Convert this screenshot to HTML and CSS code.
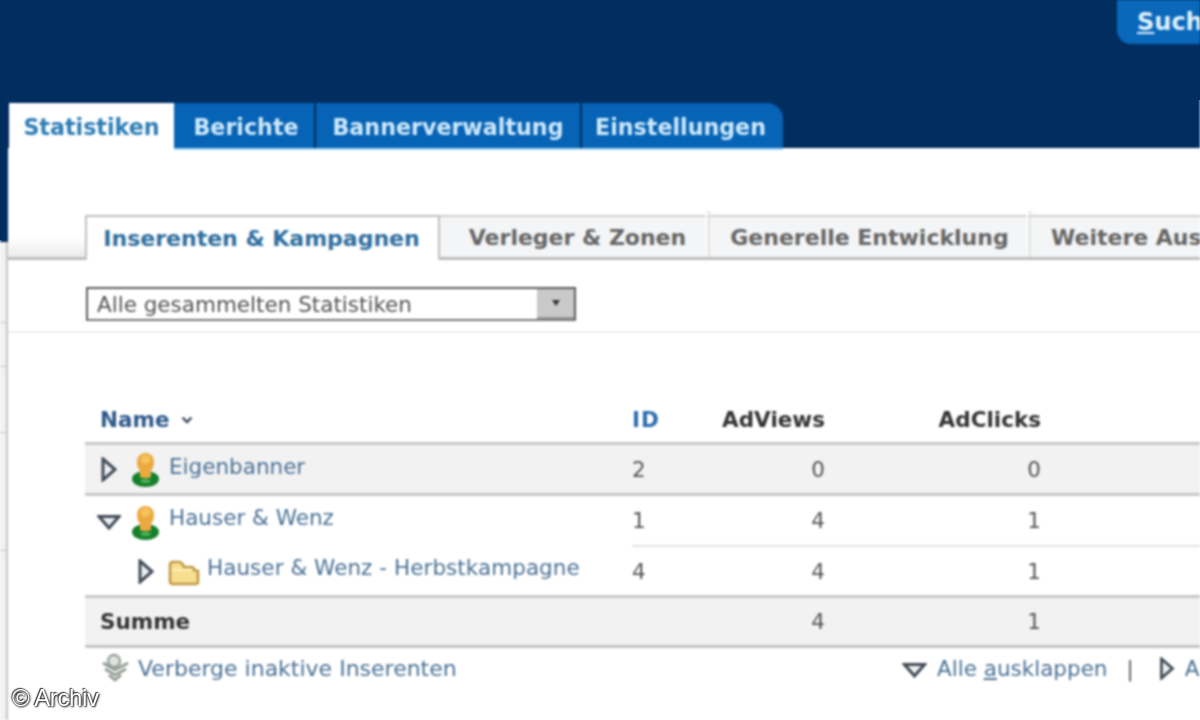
FILE: index.html
```html
<!DOCTYPE html>
<html lang="de">
<head>
<meta charset="utf-8">
<title>Statistiken</title>
<link rel="stylesheet" href="styles.css">
</head>
<body>
<div class="page">
  <div class="blurred">
    <div class="rail">
      <div class="rail-top"></div>
      <div class="rail-bottom">
        <i class="tick t1"></i><i class="tick t2"></i><i class="tick t3"></i><i class="tick t4"></i>
      </div>
    </div>
    <div class="main">
      <header class="head">
        <div class="search-row"><div class="search"><u>S</u>uche</div></div>
        <nav class="tabs">
          <div class="tab tab-active">Statistiken</div>
          <div class="tab tab-reports">Berichte</div>
          <div class="tab tab-banner">Bannerverwaltung</div>
          <div class="tab tab-settings">Einstellungen</div>
        </nav>
      </header>
      <div class="tabline"></div>
      <div class="subtabs">
        <div class="subtab-lead"></div>
        <div class="subtab sub-active">Inserenten &amp; Kampagnen</div>
        <div class="subtab sub-pub">Verleger &amp; Zonen</div>
        <div class="subtab sub-gen">Generelle Entwicklung</div>
        <div class="subtab sub-more">Weitere Ausgaben</div>
      </div>
      <div class="filter">
        <div class="select">
          <span class="select-text">Alle gesammelten Statistiken</span>
          <span class="select-btn"><svg width="8" height="6" viewBox="0 0 8 6"><path d="M0 0h8L4 6z" fill="#333"/></svg></span>
        </div>
      </div>
      <div class="table">
        <div class="row row-head">
          <div class="cell name"><span class="link-strong">Name</span>
            <svg class="sort" width="12" height="8" viewBox="0 0 12 8"><path d="M1.500 1.500 6 6l4.500-4.500" fill="none" stroke="#3a4a60" stroke-width="2.400"/></svg>
          </div>
          <div class="cell id link-id">ID</div>
          <div class="cell num">AdViews</div>
          <div class="cell num">AdClicks</div>
          <div class="cell"></div>
        </div>
        <div class="row row-shade row-thick">
          <div class="cell name">
            <span class="toggle"><svg class="tri-r" width="16" height="25" viewBox="0 0 16 25"><path d="M2 2 14 12.500 2 23z" fill="#eef1f4" stroke="#434c58" stroke-width="3"/></svg></span>
            <svg class="person" width="27" height="34" viewBox="0 0 27 34"><ellipse cx="13.500" cy="26" rx="13.500" ry="8" fill="#15802a"/><path d="M13.500 0c5 0 8.500 3.500 8.500 9 0 4-1 6.500-3 8.500V24c-3 1.500-8 1.500-11 0v-6.500C6 15.500 5 13 5 9c0-5.500 3.500-9 8.500-9z" fill="#eba93f"/><ellipse cx="13.500" cy="6.500" rx="5" ry="4.500" fill="#f5c25c"/><ellipse cx="13.500" cy="28" rx="5" ry="2" fill="#4fae58"/></svg>
            <span class="link">Eigenbanner</span>
          </div>
          <div class="cell id">2</div>
          <div class="cell num">0</div>
          <div class="cell num">0</div>
          <div class="cell"></div>
        </div>
        <div class="row row-open">
          <div class="cell name">
            <span class="toggle"><svg class="tri-d" width="24" height="16" viewBox="0 0 24 16"><path d="M2 2.500h20L12 14z" fill="#eef1f4" stroke="#434c58" stroke-width="3"/></svg></span>
            <svg class="person" width="27" height="34" viewBox="0 0 27 34"><ellipse cx="13.500" cy="26" rx="13.500" ry="8" fill="#15802a"/><path d="M13.500 0c5 0 8.500 3.500 8.500 9 0 4-1 6.500-3 8.500V24c-3 1.500-8 1.500-11 0v-6.500C6 15.500 5 13 5 9c0-5.500 3.500-9 8.500-9z" fill="#eba93f"/><ellipse cx="13.500" cy="6.500" rx="5" ry="4.500" fill="#f5c25c"/><ellipse cx="13.500" cy="28" rx="5" ry="2" fill="#4fae58"/></svg>
            <span class="link">Hauser &amp; Wenz</span>
          </div>
          <div class="cell id line-under">1</div>
          <div class="cell num line-under">4</div>
          <div class="cell num line-under">1</div>
          <div class="cell line-under"></div>
        </div>
        <div class="row row-mid">
          <div class="cell name child">
            <span class="toggle toggle-child"><svg class="tri-r" width="16" height="25" viewBox="0 0 16 25"><path d="M2 2 14 12.500 2 23z" fill="#eef1f4" stroke="#434c58" stroke-width="3"/></svg></span>
            <svg class="folder" width="32" height="26" viewBox="0 0 32 26"><path d="M2 22V5c0-2 1-3 3-3h6c2 0 3 1 4 3l1 2h7c2 0 3 1 3 3l4 1v11c0 1-1 2-3 2H5c-2 0-3-1-3-3z" fill="#f8df90" stroke="#c09a45" stroke-width="2.600"/><path d="M4 10h20" stroke="#fff0bd" stroke-width="2"/></svg>
            <span class="link">Hauser &amp; Wenz - Herbstkampagne</span>
          </div>
          <div class="cell id">4</div>
          <div class="cell num">4</div>
          <div class="cell num">1</div>
          <div class="cell"></div>
        </div>
        <div class="row row-shade row-sum">
          <div class="cell name"><strong class="sum">Summe</strong></div>
          <div class="cell id"></div>
          <div class="cell num">4</div>
          <div class="cell num">1</div>
          <div class="cell"></div>
        </div>
      </div>
      <div class="foot">
        <div class="foot-left">
          <svg class="hide-icon" width="29" height="30" viewBox="0 0 29 30"><circle cx="13" cy="8" r="6" fill="#dfe3df" stroke="#9aa29a" stroke-width="2.400"/><path d="M2 10l12 7 13-7M4 16l10 6 11-6M8 22l6 5 6-5" fill="none" stroke="#8f9b92" stroke-width="2.800"/></svg>
          <span class="link foot-hide">Verberge inaktive Inserenten</span>
        </div>
        <div class="foot-right">
          <svg class="tri-d foot-tri" width="25" height="16" viewBox="0 0 24 16"><path d="M2 2.500h20L12 14z" fill="#eef1f4" stroke="#434c58" stroke-width="3"/></svg>
          <span class="link">Alle <u>a</u>usklappen</span>
          <span class="sep">|</span>
          <svg class="tri-r" width="16" height="23" viewBox="0 0 16 25"><path d="M2 2 14 12.500 2 23z" fill="#eef1f4" stroke="#434c58" stroke-width="3"/></svg>
          <span class="link">Alle einklappen</span>
        </div>
      </div>
    </div>
  </div>
  <div class="credit">© Archiv</div>
</div>
</body>
</html>
```
FILE: styles.css
```css
* { box-sizing: border-box; }
html, body { margin: 0; padding: 0; background: #fff; }
body { font-family: "DejaVu Sans", Verdana, sans-serif; font-size: 21.5px; color: #444; }
.page {
  position: relative; width: 1200px; height: 720px; overflow: hidden;
  background:
    linear-gradient(#012d5f, #012d5f) 0 0 / 100% 100px no-repeat,
    linear-gradient(#012d5f, #012d5f) 0 0 / 4px 240px no-repeat,
    #fff;
}
.blurred { display: flex; width: 1200px; height: 720px; filter: blur(0.8px); }

.rail { width: 8px; flex: none; display: flex; flex-direction: column; }
.rail-top { height: 242px; background: #012d5f; }
.rail-bottom { flex: 1; background: #f2f2f2; position: relative; border-right: 2px solid #c4c4c4; }
.tick { position: absolute; left: 0; width: 8px; height: 1px; background: #c8c8c8; }
.t1 { top: 80px; } .t2 { top: 124px; } .t3 { top: 190px; } .t4 { top: 308px; }

.main { flex: 1; min-width: 0; display: flex; flex-direction: column; overflow: hidden; }

.head { height: 148px; background: #012d5f; display: flex; flex-direction: column; flex: none; }
.search-row { display: flex; justify-content: flex-end; height: 103px; flex: none; }
.search { width: 83px; height: 44px; background: #0a68bb; border-bottom-left-radius: 14px; color: #dff0fc; font-weight: 700; font-size: 24px; padding: 8px 0 0 20px; white-space: nowrap; overflow: hidden; }

.tabs { display: flex; height: 47px; gap: 2px; align-items: stretch; flex: none; font-weight: 700; font-size: 22.200px; padding-left: 1px; }
.tab { background: #0663b5; color: #cfe9fb; padding-top: 11px; white-space: nowrap; display: flex; justify-content: center; flex: none; }
.tab-active { width: 165px; margin-right: -2px; background: #fff; color: #2d7db5; height: 49px; }
.tab-reports { width: 140px; padding-left: 4px; }
.tab-banner { width: 264px; }
.tab-settings { width: 201px; border-top-right-radius: 16px; padding-right: 4px; }
.tabline { height: 2px; background: #a4d6f7; margin-left: 166px; width: 609px; flex: none; }

.subtabs { margin-top: 65px; height: 45px; display: flex; align-items: stretch; font-weight: 700; white-space: nowrap; flex: none; font-size: 22px; }
.subtab-lead { width: 77px; flex: none; background: linear-gradient(#fff 0 22px, #ececec 42px); border-bottom: 3px solid #bdbdbd; }
.subtab { position: relative; flex: none; display: flex; align-items: center; justify-content: center; background: #f4f5f6; border-top: 2px solid #cfcfcf; border-bottom: 3px solid #bdbdbd; color: #666; }
.sub-pub::after, .sub-gen::after { content: ""; position: absolute; right: 0; top: -6px; bottom: 0; width: 2px; background: #e2e2e2; box-shadow: -3px 0 0 #fafafa, 3px 0 0 #fafafa; }
.sub-active { width: 355px; background: #fff; color: #2f6f9f; border: 2px solid #c0c0c0; border-bottom: none; padding-bottom: 1px; padding-right: 2px; }
.sub-pub { width: 270px; padding-left: 5px; }
.sub-gen { width: 321px; padding-right: 2px; }
.sub-more { width: 300px; justify-content: flex-start; padding-left: 20px; }

.filter { height: 73px; border-bottom: 2px solid #ececec; padding: 27px 0 0 78px; flex: none; }
.select { width: 490px; height: 34px; border: 2px solid #5c5c5c; border-bottom-color: #777; display: flex; justify-content: space-between; align-items: stretch; background: #fff; }
.select-text { padding-left: 9px; line-height: 32px; color: #555; white-space: nowrap; }
.select-btn { width: 37px; background: #c9c9c9; display: flex; align-items: center; justify-content: center; border-bottom: 2px solid #999; }

.table { margin: 64px 0 0 77px; width: 1115px; flex: none; }
.row { display: grid; grid-template-columns: 547px 60px 133px 216px 1fr; height: 51px; }
.row-head { height: 48px; font-weight: 700; border-bottom: 3px solid #c8c8c8; color: #333; }
.row-shade { background: #f2f2f2; }
.row-thick { border-bottom: 3px solid #c8c8c8; }
.row-mid { border-bottom: 3px solid #c8c8c8; }
.row-sum { height: 50px; border-bottom: 3px solid #c4c4c4; }
.cell { display: flex; align-items: center; white-space: nowrap; }
.row-head .cell { align-items: flex-start; padding-top: 10px; }
.name { padding-left: 12px; }
.row-sum .name, .row-head .name { padding-left: 15px; }
.child { padding-left: 53px; }
.toggle { width: 35px; flex: none; display: flex; align-items: center; }
.toggle-child { width: 30px; }
.tri-r { margin-left: 4px; }
.child .tri-r { margin-left: 0; }
.foot-right .tri-r { margin-left: 0; }
.num { justify-content: flex-end; color: #555; }
.row-head .num { color: #333; }
.id { color: #555; }
.row-head .link-id { color: #2c6cb0; letter-spacing: 1px; }
.link-strong { color: #2f5a8c; }
.sort { margin-left: 11px; margin-top: 9px; }
.link { color: #4a7196; }
.sum { color: #333; }
.line-under { border-bottom: 2px solid #e2e2e2; }
.row .person { margin-top: 2px; flex: none; }
.row .link { margin-top: -5px; margin-left: 10px; }
.row-open .link { margin-top: -8px; }
.row .folder { margin-top: 4px; flex: none; }
.row-mid .link { margin-top: -7px; margin-left: 7px; letter-spacing: 0.05px; }

.foot { display: flex; flex: none; padding: 5px 0 0 93px; align-items: center; white-space: nowrap; }
.foot-left { width: 801px; flex: none; display: flex; align-items: center; gap: 8px; }
.foot-hide { font-size: 22px; }
.foot-right { display: flex; align-items: center; gap: 10px; flex: none; }
.foot-tri { margin-top: 4px; }
.sep { margin: 0 15px 0 9px; color: #555; }

.credit { position: absolute; left: 12px; top: 684px; font-family: "Liberation Sans", Arial, sans-serif; font-size: 24px; letter-spacing: -0.4px; color: #fff; text-shadow: 0 0 2px #222, 1px 1px 2px #222, -1px -1px 1px #444; }
```
